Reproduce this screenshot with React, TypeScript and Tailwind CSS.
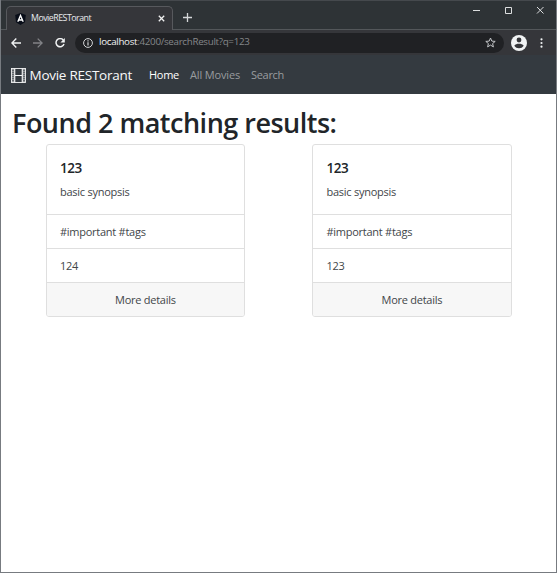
import React from "react";

function FilmIcon() {
  return (
    <svg className="h-[15px] w-[15px] shrink-0" viewBox="0 0 15 15" fill="none" stroke="#f4f5f6">
      <rect x="0.5" y="0.5" width="14" height="14" strokeWidth="0.9" />
      <path d="M3.7 0.5v14M11.3 0.5v14M3.5 7.5h8" strokeWidth="1.2" />
      <path d="M2 1.5v12.5M13 1.5v12.5" strokeWidth="2" strokeDasharray="0.8 1.2" />
    </svg>
  );
}

function AngularIcon() {
  return (
    <svg className="h-[12px] w-[11px] shrink-0" viewBox="0 0 11 12">
      <path d="M5.5 0L10.8 1.9 10 9.2 5.5 12 1 9.2 0.2 1.9z" fill="#080d18" />
      <path d="M2.8 8.8L5.5 2.4 8.2 8.8M3.8 7h3.4" fill="none" stroke="#fff" strokeWidth="1.3" />
    </svg>
  );
}

function TitleBar() {
  return (
    <div className="flex h-[30px] border-t border-[#45494d] bg-[#2e3336]">
      <div className="w-[5px] border-b border-[#53575a]" />
      <div className="mt-[5px] flex h-6 w-[167px] items-center rounded-t-[5px] border border-b-0 border-[#57595d] bg-[#35363a] pl-[8px] pr-[7px]">
        <AngularIcon />
        <span className="ml-[5px] whitespace-nowrap text-[8.8px] tracking-[-0.5px] text-[#e8eaed]">MovieRESTorant</span>
        <svg className="ml-auto h-[7px] w-[7px]" viewBox="0 0 7 7" stroke="#f1f1f1" strokeWidth="1.3">
          <path d="M0.8 0.8l5.4 5.4M6.2 0.8L0.8 6.2" />
        </svg>
      </div>
      <div className="flex flex-1 border-b border-[#53575a]">
        <svg className="ml-[10px] mt-3 h-[9px] w-[9px]" viewBox="0 0 9 9" stroke="#d5d7d9" strokeWidth="1.3">
          <path d="M4.5 0v9M0 4.5h9" />
        </svg>
        <svg className="ml-auto mr-[12px] mt-[5px] h-[9px] w-[71px]" viewBox="0 0 71 9" fill="none" stroke="#dcdedf" strokeWidth="1">
          <path d="M0 4.5h7M32.5 1.5h6v6h-6zM64 1l6.5 6.5M70.5 1L64 7.5" />
        </svg>
      </div>
    </div>
  );
}

function Toolbar() {
  return (
    <div className="flex h-[25px] items-center bg-[#35363a] pl-[10px]">
      <svg className="h-[10px] w-[10px]" viewBox="0 0 10 10" fill="none" stroke="#f1f3f4" strokeWidth="1.4">
        <path d="M10 5H1M5.3 0.6L0.9 5l4.4 4.4" />
      </svg>
      <svg className="ml-[12px] h-[10px] w-[10px]" viewBox="0 0 10 10" fill="none" stroke="#828387" strokeWidth="1.3">
        <path d="M0 5h9M4.7 0.6L9.1 5 4.7 9.4" />
      </svg>
      <svg className="ml-3 h-[10px] w-[10px]" viewBox="0 0 10 10" fill="none" stroke="#f1f3f4" strokeWidth="1.5">
        <path d="M8.3 2.1A4.1 4.1 0 1 0 9 6.1" />
        <path d="M9.8 0v4.4H5.4z" fill="#f1f3f4" stroke="none" />
      </svg>
      <div className="ml-[10px] flex h-5 w-[429px] items-center rounded-full bg-[#202124] pl-[8px] pr-[8px]">
        <svg className="h-[10px] w-[10px]" viewBox="0 0 10 10" fill="none" stroke="#d4d6d9" strokeWidth="1">
          <circle cx="5" cy="5" r="4.4" />
          <path d="M5 4.3v3.2M5 2.3v1.1" strokeWidth="1.2" />
        </svg>
        <span className="ml-[6px] whitespace-nowrap text-[9.8px] tracking-[-0.31px] text-[#85878a]">
          <span className="text-[#f1f3f4]">localhost</span>:4200/searchResult?q=123
        </span>
        <svg className="ml-auto h-[11px] w-[11px]" viewBox="0 0 11 11" fill="none" stroke="#c4c6c9" strokeWidth="1">
          <path d="M5.5 1l1.3 3.1 3.4.3-2.6 2.2.8 3.3-2.9-1.8-2.9 1.8.8-3.3L.8 4.4l3.4-.3z" />
        </svg>
      </div>
      <svg className="ml-[7px] h-4 w-4" viewBox="0 0 16 16">
        <circle cx="8" cy="8" r="8" fill="#f1f3f4" />
        <circle cx="8" cy="5" r="2.4" fill="#35363a" />
        <path d="M3.3 10.8C4.3 9.4 6 8.8 8 8.8s3.7.6 4.7 2C11.6 12.5 10 13.3 8 13.3s-3.6-.8-4.7-2.5z" fill="#35363a" />
      </svg>
      <svg className="ml-[13px] h-[10px] w-[3px]" viewBox="0 0 3 10" fill="#f1f3f4">
        <circle cx="1.5" cy="1.3" r="1.1" />
        <circle cx="1.5" cy="5" r="1.1" />
        <circle cx="1.5" cy="8.7" r="1.1" />
      </svg>
    </div>
  );
}

function Navbar() {
  return (
    <nav className="flex h-[39px] items-center bg-[#343a40] pl-[10px] pt-[2px] text-[11px]">
      <FilmIcon />
      <span className="ml-[3.5px] w-[119.5px] whitespace-nowrap text-[13.5px] tracking-[-0.26px] text-[#f8f9fa]">Movie RESTorant</span>
      <span className="w-[41px] whitespace-nowrap tracking-[-0.3px] text-white">Home</span>
      <span className="w-[61px] whitespace-nowrap tracking-[-0.15px] text-[#999c9f]">All Movies</span>
      <span className="whitespace-nowrap tracking-[-0.3px] text-[#999c9f]">Search</span>
    </nav>
  );
}

function MovieCard({ id }: { id: string }) {
  return (
    <article className="w-[199.5px] overflow-hidden rounded-[3px] border border-[#dfdfdf] text-[11px] leading-[17px] tracking-[-0.26px] text-[#424649]">
      <div className="h-[69px] px-[13.4px] pt-[15px]">
        <h2 className="text-[13.5px] font-semibold leading-[17px] tracking-[-0.5px] text-[#212529]">123</h2>
        <p className="mt-[6px]">basic synopsis</p>
      </div>
      <div className="flex h-[34px] items-center border-t border-[#dfdfdf] px-[13.4px]">#important #tags</div>
      <div className="flex h-[34px] items-center border-t border-[#dfdfdf] px-[13.4px]">{id}</div>
      <div className="flex h-[34px] items-center justify-center border-t border-[#dfdfdf] bg-[#f7f7f7]">More details</div>
    </article>
  );
}

export default function App() {
  return (
    <div className="flex h-[573px] w-[557px] flex-col overflow-hidden border-x border-b border-[#777b80] bg-white font-['Open_Sans','Noto_Sans',sans-serif]">
      <TitleBar />
      <Toolbar />
      <Navbar />
      <main className="pt-[13px]">
        <h1 className="ml-[11px] whitespace-nowrap text-[27px] font-semibold leading-[32px] tracking-[-0.5px] text-[#212529]">Found 2 matching results:</h1>
        <div className="ml-[44.6px] mt-[5px] flex gap-[67px]">
          <MovieCard id="124" />
          <MovieCard id="123" />
        </div>
      </main>
    </div>
  );
}
